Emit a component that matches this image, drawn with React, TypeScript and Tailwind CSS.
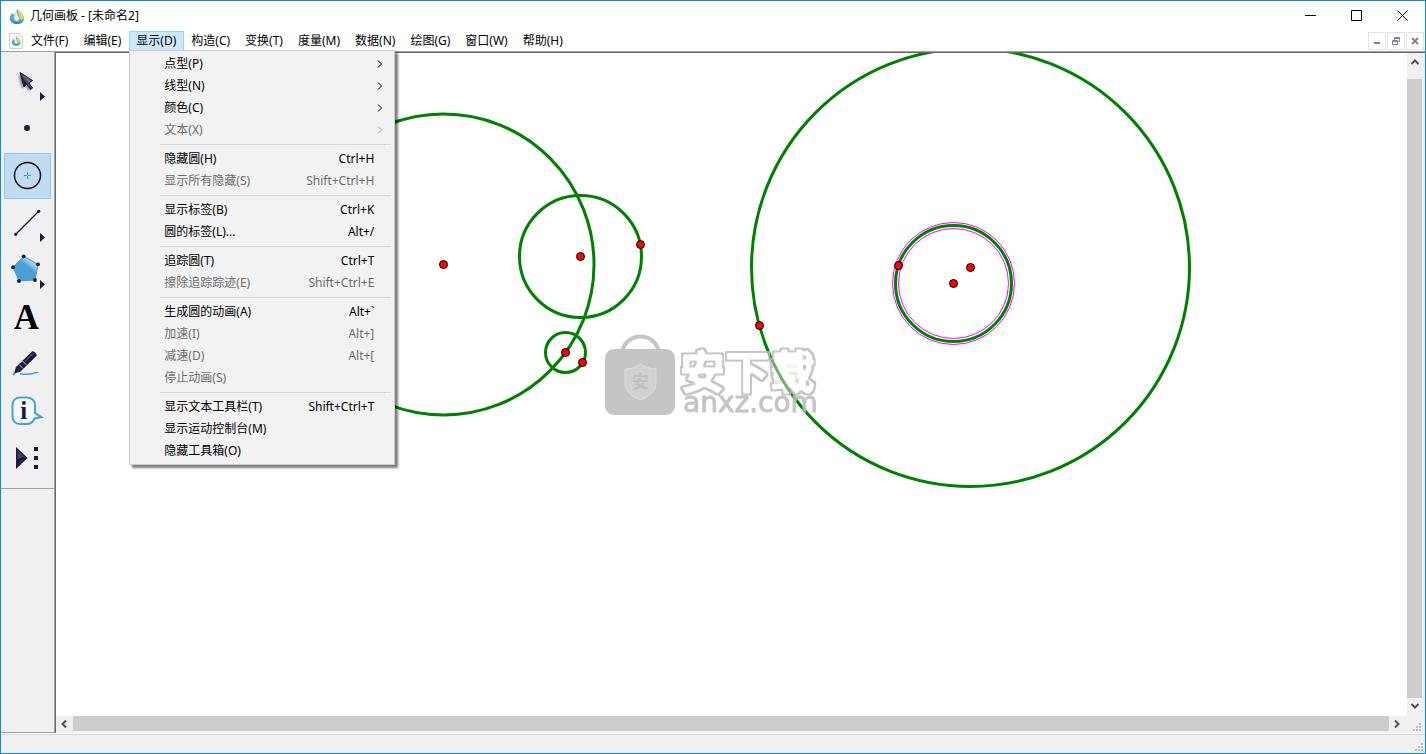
import React from "react";

type MenuEntry = {
  label: string;
  keys?: string;
  submenu?: boolean;
  disabled?: boolean;
};

const menus = [
  "文件(F)",
  "编辑(E)",
  "显示(D)",
  "构造(C)",
  "变换(T)",
  "度量(M)",
  "数据(N)",
  "绘图(G)",
  "窗口(W)",
  "帮助(H)",
];

const displayMenu: MenuEntry[][] = [
  [
    { label: "点型(P)", submenu: true },
    { label: "线型(N)", submenu: true },
    { label: "颜色(C)", submenu: true },
    { label: "文本(X)", submenu: true, disabled: true },
  ],
  [
    { label: "隐藏圆(H)", keys: "Ctrl+H" },
    { label: "显示所有隐藏(S)", keys: "Shift+Ctrl+H", disabled: true },
  ],
  [
    { label: "显示标签(B)", keys: "Ctrl+K" },
    { label: "圆的标签(L)...", keys: "Alt+/" },
  ],
  [
    { label: "追踪圆(T)", keys: "Ctrl+T" },
    { label: "擦除追踪踪迹(E)", keys: "Shift+Ctrl+E", disabled: true },
  ],
  [
    { label: "生成圆的动画(A)", keys: "Alt+`" },
    { label: "加速(I)", keys: "Alt+]", disabled: true },
    { label: "减速(D)", keys: "Alt+[", disabled: true },
    { label: "停止动画(S)", disabled: true },
  ],
  [
    { label: "显示文本工具栏(T)", keys: "Shift+Ctrl+T" },
    { label: "显示运动控制台(M)" },
    { label: "隐藏工具箱(O)" },
  ],
];

// sketch coordinates, origin at the top left of the drawing area
const circles = [
  { cx: 387.5, cy: 211.5, r: 150.5 },
  { cx: 524.5, cy: 203.5, r: 61 },
  { cx: 509.5, cy: 299.5, r: 20 },
  { cx: 914.5, cy: 214.5, r: 219 },
  { cx: 897.5, cy: 230.5, r: 58, selected: true },
];

const points = [
  [387.5, 211.5],
  [524.5, 203.5],
  [584.5, 191.5],
  [509.5, 299.5],
  [526.5, 309.5],
  [703.5, 272.5],
  [842.5, 212.5],
  [914.5, 214.5],
  [897.5, 230.5],
];

const Drop: React.FC = () => (
  <>
    <path d="M8 0.500C9 3 15 6 15 10.500C15 14 12 16 8 16C4 16 1 14 1 10.500C1 8.500 2 6.500 3.500 5L5 7C6.500 5.500 8 3.500 8 0.500Z" fill="#5aaed4" />
    <path d="M8.500 0.500C9.500 4 15 6 14.500 10.500C13.500 12.500 11.500 12 10.500 9.500C10 7 8 4.500 8.500 0.500Z" fill="#ecd04a" />
    <path d="M3.500 5C1 8 1 12 4.500 13.500C8 15 12.500 14 14.500 11.500C14 15 10 16 8 16C3 16 0 12 1.500 8Z" fill="#3f83a6" />
    <path d="M7.500 4C5 7 4.500 10 6 12C8 13.500 10.500 12.500 10 10C9.500 8 8 7 7.500 4Z" fill="#eef9fd" />
  </>
);

const Flyout: React.FC = () => <path d="M36 33L41 37.500L36 42Z" fill="#1e1a3c" />;

const tools: { name: string; icon: React.ReactNode }[] = [
  {
    name: "移动箭头工具",
    icon: (
      <>
        <defs>
          <filter id="arrowShadow" x="-50%" y="-50%" width="200%" height="200%">
            <feGaussianBlur stdDeviation="1.3" />
          </filter>
          <linearGradient id="arrowFill" x1="0" y1="1" x2="1" y2="0">
            <stop offset="0.4" stopColor="#1e1a3c" />
            <stop offset="0.6" stopColor="#77748c" />
            <stop offset="0.8" stopColor="#1e1a3c" />
          </linearGradient>
        </defs>
        <path
          d="M14 15L18 30L21 27L25 32L27 30L23 25L26 23Z"
          fill="#8a8a8a"
          filter="url(#arrowShadow)"
        />
        <path
          d="M16 13.500L20 28L22.700 25.300L26.500 30.500L28.500 29L24.800 24L28.500 21.500Z"
          fill="url(#arrowFill)"
          stroke="#1e1a3c"
        />
        <Flyout />
      </>
    ),
  },
  { name: "点工具", icon: <circle cx="23" cy="22" r="3" fill="#1e1a3c" /> },
  {
    name: "圆工具",
    icon: (
      <>
        <circle cx="23.5" cy="22.500" r="13" fill="none" stroke="#111" strokeWidth="1.500" />
        <path d="M20 22.500H23M24 22.500H27M23.500 19V22M23.500 23V26" stroke="#3d8fc4" />
      </>
    ),
  },
  {
    name: "线段直尺工具",
    icon: (
      <>
        <path d="M11.700 34.300L34.700 11.300" stroke="#1e1a3c" strokeWidth="1.300" />
        <circle cx="11.700" cy="34.300" r="1.600" fill="#1e1a3c" />
        <circle cx="34.700" cy="11.300" r="1.600" fill="#1e1a3c" />
        <Flyout />
      </>
    ),
  },
  {
    name: "多边形工具",
    icon: (
      <>
        <defs>
          <linearGradient id="poly" x1="0.3" y1="0.7" x2="0.800" y2="0.100">
            <stop offset="0.5" stopColor="#4a9fd4" />
            <stop offset="0.800" stopColor="#a9d3ee" />
            <stop offset="1" stopColor="#4a9fd4" />
          </linearGradient>
        </defs>
        <path
          d="M19.700 9.300L34 17.300L31 33L15 34L9 20.200Z"
          fill="url(#poly)"
          stroke="#4a9fd4"
        />
        <g fill="#1e1a3c">
          <circle cx="19.700" cy="9.300" r="1.900" />
          <circle cx="34" cy="17.300" r="1.900" />
          <circle cx="31" cy="33" r="1.900" />
          <circle cx="15" cy="34" r="1.900" />
          <circle cx="9" cy="20.200" r="1.900" />
        </g>
        <Flyout />
      </>
    ),
  },
  {
    name: "文本工具",
    icon: (
      <text x="22.500" y="35" textAnchor="middle" className="font-['Liberation_Serif',serif] text-[35px] font-bold">
        A
      </text>
    ),
  },
  {
    name: "标记工具",
    icon: (
      <>
        <path d="M9 34L12.500 30" stroke="#4a9fd4" strokeWidth="2" />
        <path d="M16 33C22 33.500 26 33.500 29 32.500C31 31.500 33 32 34.500 31" fill="none" stroke="#4a9fd4" strokeWidth="1.500" />
        <path d="M10.500 32L12 25.500L17 30L16 31Z" fill="#1e1a3c" />
        <path d="M12 26L28 10.500C29.500 9.500 33.500 13 32.500 15L17 30Z" fill="#1e1a3c" />
        <path d="M18.500 20L23 24.500M15 23.500L19 27.500" stroke="#efefef" strokeWidth="0.800" />
        <path d="M21.500 20L29 12.500" stroke="#8d8aa0" strokeWidth="0.800" />
      </>
    ),
  },
  {
    name: "信息工具",
    icon: (
      <>
        <path
          d="M16 9.500H23C28 9.500 31 13 31 17.500V25L37.500 29.300L30.500 30.500C29 34 26.500 36 23 36H16C11 36 8.500 32.500 8.500 28V17.500C8.500 13 11 9.500 16 9.500Z"
          fill="#f4f9fd"
          stroke="#4a9fd4"
          strokeWidth="2"
        />
        <text x="19.700" y="31" textAnchor="middle" fill="#1e1a3c" className="font-['Liberation_Serif',serif] text-[25px] font-bold">
          i
        </text>
      </>
    ),
  },
  {
    name: "自定义工具",
    icon: (
      <>
        <path d="M12 12V34L23.700 23Z" fill="#1e1a3c" />
        <path d="M13.500 15L20 21.500L13.500 24Z" fill="#5d5a75" opacity="0.600" />
        <path d="M30 12h4v4h-4zM30 21h4v4h-4zM30 30h4v4h-4z" fill="#1e1a3c" />
      </>
    ),
  },
];

const Chevron: React.FC<{ className?: string }> = ({ className = "" }) => (
  <svg viewBox="0 0 8 8" className={`h-2 w-2 ${className}`} fill="none" stroke="currentColor">
    <path d="M2 0.500L5.500 4L2 7.500" />
  </svg>
);

const ScrollArrow: React.FC<{ label: string; className: string }> = ({ label, className }) => (
  <button aria-label={label} className="flex h-4 w-4 shrink-0 items-center justify-center text-[#505050]">
    <svg viewBox="0 0 8 8" className={`h-2 w-2 ${className}`} fill="none" stroke="currentColor" strokeWidth="2">
      <path d="M2 0.500L5.500 4L2 7.500" />
    </svg>
  </button>
);

const Grip: React.FC = () => (
  <svg viewBox="0 0 8 8" className="h-2 w-2" fill="#bfbfbf">
    <path d="M6 0h2v2h-2zM3 3h2v2h-2zM6 3h2v2h-2zM0 6h2v2h-2zM3 6h2v2h-2zM6 6h2v2h-2z" />
  </svg>
);

const DisplayMenu: React.FC = () => (
  <div
    role="menu"
    className="absolute top-[19px] left-0 z-10 w-[266px] border border-[#ccc] bg-[#f2f2f2] py-[2px] pr-[3px] pl-[30px] shadow-[3px_3px_2px_rgba(0,0,0,0.5)]"
  >
    {displayMenu.map((group, i) => (
      <div key={i} className={i > 0 ? "mt-[3px] border-t border-[#d7d7d7] pt-[3px]" : ""}>
        {group.map((item) => (
          <button
            key={item.label}
            role="menuitem"
            disabled={item.disabled}
            className="flex h-[22px] w-full items-center justify-between pr-[17px] pl-1 whitespace-nowrap disabled:text-[#6d6d6d]"
          >
            <span>{item.label}</span>
            {item.keys && <span>{item.keys}</span>}
            {item.submenu && <Chevron className={item.disabled ? "-mr-2.5 text-[#a0a0a0]" : "-mr-2.5"} />}
          </button>
        ))}
      </div>
    ))}
  </div>
);

const Watermark: React.FC = () => (
  <g opacity="0.85">
    <defs>
      <filter id="outline" x="-5%" y="-5%" width="110%" height="110%">
        <feMorphology in="SourceAlpha" operator="dilate" radius="1" result="fat" />
        <feMorphology in="SourceAlpha" operator="erode" radius="1" result="thin" />
        <feFlood floodColor="#bcbcbc" />
        <feComposite in2="fat" operator="in" />
        <feComposite in2="thin" operator="out" result="edge" />
        <feFlood floodColor="#fff" floodOpacity="0.5" />
        <feComposite in2="thin" operator="in" result="inside" />
        <feMerge>
          <feMergeNode in="inside" />
          <feMergeNode in="edge" />
        </feMerge>
      </filter>
    </defs>
    <path d="M566 300C569 278 600 278 603 300" fill="none" stroke="#bcbcbc" strokeWidth="4" />
    <rect x="549" y="296" width="70" height="66" rx="9" fill="#bcbcbc" />
    <path
      d="M584.500 311C589 314 594 316 600 316V330C600 338 593 344 584.500 347C576 344 569 338 569 330V316C575 316 580 314 584.500 311Z"
      fill="#cacaca"
      stroke="#d8d8d8"
    />
    <text x="584.500" y="335" textAnchor="middle" fill="#b4b4b4" className="text-[17px] font-bold">
      安
    </text>
    <text
      x="624"
      y="336"
      fill="#fff"
      stroke="#fff"
      strokeWidth="3"
      strokeLinejoin="round"
      filter="url(#outline)"
      className="text-[45px] font-bold"
    >
      安下载
    </text>
    <text
      x="627"
      y="359"
      fill="#bcbcbc"
      stroke="#bcbcbc"
      className="font-['DejaVu_Sans',sans-serif] text-[28px]"
    >
      anxz.com
    </text>
  </g>
);

const Sketch: React.FC = () => (
  <svg className="h-full w-full bg-white">
    {circles.map((c, i) => (
      <g key={i} fill="none">
        {c.selected && (
          <g stroke="#f0f">
            <circle cx={c.cx} cy={c.cy} r={c.r - 3} />
            <circle cx={c.cx} cy={c.cy} r={c.r + 3} />
          </g>
        )}
        <circle cx={c.cx} cy={c.cy} r={c.r} stroke="#008000" strokeWidth="3" />
      </g>
    ))}
    {points.map(([x, y], i) => (
      <circle key={i} cx={x} cy={y} r="4" fill="#f00" stroke="#000" />
    ))}
    <Watermark />
  </svg>
);

const App: React.FC = () => {
  const [tool, setTool] = React.useState("圆工具");
  const [open, setOpen] = React.useState<string | null>("显示(D)");

  return (
    <div className="flex h-screen flex-col border border-[#1883d7] bg-white font-['Noto_Sans','Noto_Sans_CJK_SC',sans-serif] text-[12px] leading-4 text-black">
      <header className="flex h-[30px] shrink-0 items-center pl-2">
        <svg viewBox="0 0 16 16" className="h-4 w-4">
          <Drop />
        </svg>
        <h1 className="ml-[5px]">几何画板 - [未命名2]</h1>
        <div className="ml-auto flex h-full pb-0.5">
          <button aria-label="最小化" className="flex w-[46px] items-center justify-center">
            <svg viewBox="0 0 11 11" className="h-[11px] w-[11px]" stroke="#000">
              <path d="M0 5.500H11" />
            </svg>
          </button>
          <button aria-label="最大化" className="flex w-[46px] items-center justify-center">
            <svg viewBox="0 0 11 11" className="h-[11px] w-[11px]" fill="none" stroke="#000">
              <path d="M0.500 0.500H10.500V10.500H0.500Z" />
            </svg>
          </button>
          <button aria-label="关闭" className="flex w-[46px] items-center justify-center">
            <svg viewBox="0 0 11 11" className="h-[11px] w-[11px]" stroke="#000">
              <path d="M0.500 0.500L10.500 10.500M10.500 0.500L0.500 10.500" />
            </svg>
          </button>
        </div>
      </header>

      <nav className="flex h-5 shrink-0 items-center pl-2">
        <svg viewBox="0 0 14 16" className="mr-px h-4 w-[14px]">
          <path d="M0.500 0.500H10L13.500 4V15.500H0.500Z" fill="#f6f6f6" stroke="#d0d0d0" />
          <g transform="translate(2.500 3) scale(0.600)">
            <Drop />
          </g>
        </svg>
        {menus.map((m) => (
          <div key={m} className="relative h-5">
            <button
              onClick={() => setOpen(open === m ? null : m)}
              className={`h-5 border pr-[7px] pl-1.5 whitespace-nowrap ${
                open === m ? "border-[#99d1ff] bg-[#cce8ff]" : "border-transparent"
              }`}
            >
              {m}
            </button>
            {m === "显示(D)" && open === m && <DisplayMenu />}
          </div>
        ))}
        <div className="ml-auto flex gap-px pr-px text-[#75869a]">
          <button aria-label="最小化文档" className="flex h-[18px] w-[18px] items-center justify-center border border-[#e3e3e3]">
            <svg viewBox="0 0 8 8" className="h-2 w-2" fill="currentColor">
              <path d="M1 5h6v2h-6z" />
            </svg>
          </button>
          <button aria-label="还原文档" className="flex h-[18px] w-[18px] items-center justify-center border border-[#e3e3e3]">
            <svg viewBox="0 0 8 8" className="h-2 w-2" fill="none" stroke="currentColor">
              <path d="M0.500 3.500H5.500V7.500H0.500ZM0 4.500H6M2.500 3V0.500H7.500V4.500H6M2 1.500H8" />
            </svg>
          </button>
          <button aria-label="关闭文档" className="flex h-[18px] w-[18px] items-center justify-center border border-[#e3e3e3]">
            <svg viewBox="0 0 8 8" className="h-2 w-2" stroke="currentColor" strokeWidth="2">
              <path d="M1 1L7 7M7 1L1 7" />
            </svg>
          </button>
        </div>
      </nav>

      <main className="flex min-h-0 flex-1 border-t border-b border-t-[#a0a0a0] border-b-white">
        <aside className="w-[54px] shrink-0 border-r border-b border-[#a0a0a0] bg-[#f0f0f0]">
          <div className="flex flex-col gap-px border-b border-[#a0a0a0] px-[3px] py-[7px]">
            {tools.map(({ name, icon }) => (
              <button
                key={name}
                aria-label={name}
                onClick={() => setTool(name)}
                className={`h-[46px] w-[47px] ${
                  tool === name ? "bg-[#c0dcf3] outline -outline-offset-1 outline-[#90c8f6]" : ""
                }`}
              >
                <svg viewBox="0 0 47 46" className="h-[46px] w-[47px]">
                  {icon}
                </svg>
              </button>
            ))}
          </div>
        </aside>
        <section className="flex min-w-0 flex-1 flex-col border-t border-l border-[#696969] bg-[#f0f0f0]">
          <div className="flex min-h-0 flex-1">
            <div className="min-w-0 flex-1">
              <Sketch />
            </div>
            <div className="flex w-[18px] shrink-0 flex-col pt-px pb-0.5">
              <ScrollArrow label="向上滚动" className="-rotate-90" />
              <div className="mt-[9px] w-[15px] flex-1 bg-[#cdcdcd]" />
              <ScrollArrow label="向下滚动" className="rotate-90" />
            </div>
          </div>
          <div className="flex h-[17px] shrink-0">
            <ScrollArrow label="向左滚动" className="rotate-180" />
            <div className="ml-px h-[15px] flex-1 bg-[#cdcdcd]" />
            <ScrollArrow label="向右滚动" className="" />
            <div className="flex w-5 items-center justify-end pt-1 pr-1">
              <Grip />
            </div>
          </div>
        </section>
      </main>

      <footer className="flex h-[19px] shrink-0 items-end justify-end border-t border-[#d7d7d7] bg-[#f0f0f0] p-0.5">
        <Grip />
      </footer>
    </div>
  );
};

export default App;
